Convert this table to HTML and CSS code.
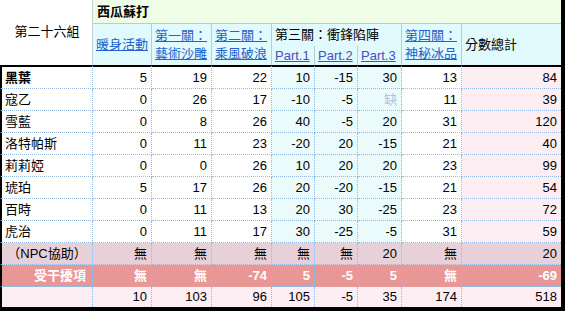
FILE: index.html
```html
<!DOCTYPE html>
<html lang="zh-Hant">
<head>
<meta charset="utf-8">
<title>第二十六組 西瓜蘇打</title>
<link rel="stylesheet" href="styles.css">
</head>
<body>
<table class="score">
  <colgroup>
    <col class="c-name"><col class="c-60"><col class="c-61"><col class="c-61">
    <col class="c-43"><col class="c-43"><col class="c-44"><col class="c-61"><col class="c-sum">
  </colgroup>
  <thead>
    <tr class="h1">
      <th class="grp" rowspan="3">第二十六組</th>
      <th class="title" colspan="8">西瓜蘇打</th>
    </tr>
    <tr class="h2">
      <th class="hd" rowspan="2"><a href="#" class="lnk">暖身活動</a></th>
      <th class="hd two" rowspan="2"><a href="#" class="lnk">第一關：</a><br><a href="#" class="lnk">藝術沙雕</a></th>
      <th class="hd two" rowspan="2"><a href="#" class="lnk">第二關：</a><br><a href="#" class="lnk">乘風破浪</a></th>
      <th class="hd" colspan="3">第三關：衝鋒陷陣</th>
      <th class="hd two" rowspan="2"><a href="#" class="lnk">第四關：</a><br><a href="#" class="lnk">神秘冰品</a></th>
      <th class="hd last" rowspan="2">分數總計</th>
    </tr>
    <tr class="h3">
      <th class="hd part"><a href="#" class="vis">Part.1</a></th>
      <th class="hd part"><a href="#" class="vis">Part.2</a></th>
      <th class="hd part"><a href="#" class="vis">Part.3</a></th>
    </tr>
  </thead>
  <tbody>
    <tr class="first">
      <td class="nm b">黑葉</td><td>5</td><td>19</td><td>22</td><td class="p">10</td><td class="p">-15</td><td class="p">30</td><td>13</td><td class="t">84</td>
    </tr>
    <tr>
      <td class="nm">寇乙</td><td>0</td><td>26</td><td>17</td><td class="p">-10</td><td class="p">-5</td><td class="p miss">缺</td><td>11</td><td class="t">39</td>
    </tr>
    <tr>
      <td class="nm">雪藍</td><td>0</td><td>8</td><td>26</td><td class="p">40</td><td class="p">-5</td><td class="p">20</td><td>31</td><td class="t">120</td>
    </tr>
    <tr>
      <td class="nm">洛特帕斯</td><td>0</td><td>11</td><td>23</td><td class="p">-20</td><td class="p">20</td><td class="p">-15</td><td>21</td><td class="t">40</td>
    </tr>
    <tr>
      <td class="nm">莉莉婭</td><td>0</td><td>0</td><td>26</td><td class="p">10</td><td class="p">20</td><td class="p">20</td><td>23</td><td class="t">99</td>
    </tr>
    <tr>
      <td class="nm">琥珀</td><td>5</td><td>17</td><td>26</td><td class="p">20</td><td class="p">-20</td><td class="p">-15</td><td>21</td><td class="t">54</td>
    </tr>
    <tr>
      <td class="nm">百時</td><td>0</td><td>11</td><td>13</td><td class="p">20</td><td class="p">30</td><td class="p">-25</td><td>23</td><td class="t">72</td>
    </tr>
    <tr>
      <td class="nm">虎治</td><td>0</td><td>11</td><td>17</td><td class="p">30</td><td class="p">-25</td><td class="p">-5</td><td>31</td><td class="t">59</td>
    </tr>
    <tr class="npc">
      <td class="nm ctr">（NPC協助）</td><td>無</td><td>無</td><td>無</td><td>無</td><td>無</td><td>20</td><td>無</td><td>20</td>
    </tr>
    <tr class="hit">
      <td class="nm rt">受干擾項</td><td>無</td><td>無</td><td>-74</td><td>5</td><td>-5</td><td>5</td><td>無</td><td>-69</td>
    </tr>
    <tr class="sum">
      <td class="nm"></td><td>10</td><td>103</td><td>96</td><td>105</td><td>-5</td><td>35</td><td>174</td><td>518</td>
    </tr>
  </tbody>
</table>
</body>
</html>
```
FILE: styles.css
```css
html, body {
  margin: 0;
  padding: 0;
  background: #000;
}
body {
  width: 565px;
  height: 311px;
  overflow: hidden;
}
.score {
  border-collapse: separate;
  border-spacing: 0;
  table-layout: fixed;
  width: 561px;
  font-family: "Liberation Sans", "Noto Sans CJK TC", sans-serif;
  font-size: 13px;
  color: #000;
  background: #fff;
}
.c-name { width: 93px; }
.c-60 { width: 59px; }
.c-61 { width: 60px; }
.c-43 { width: 43px; }
.c-44 { width: 44px; }
.c-sum { width: 99px; }

th, td {
  box-sizing: border-box;
  padding: 0 4px 0 3px;
  line-height: 16px;
  font-weight: normal;
  white-space: nowrap;
  overflow: hidden;
  vertical-align: middle;
}

/* header */
.h1 { height: 24px; }
.h2 { height: 22px; }
.h3 { height: 19px; }
.grp {
  background: #fff;
  border-left: 2px solid #fff;
  border-right: 1px solid #c6d0d6;
  text-align: center;
  padding: 0 0 2px 0;
}
.title {
  background: #effde6;
  border-bottom: 1px solid #c2cac2;
  text-align: left;
  font-weight: bold;
  padding-left: 4px;
}
.hd {
  background: #e0fafe;
  border-right: 1px solid #b9ccd6;
  text-align: left;
}
.hd.two { line-height: 18px; }
.hd.last { border-right: 0; }
.lnk { color: #2560cc; text-decoration: underline; }
.vis { color: #4a4cc2; text-decoration: underline; }

/* body */
td {
  text-align: right;
  padding: 0 4px 0 3px;
  border-right: 1px dotted #93bbe2;
  border-bottom: 1px dotted #93bbe2;
  background: #fff;
}
td:last-child { border-right: 0; }
tbody tr { height: 22px; }
tbody tr.first { height: 24px; }
tbody tr.first td { border-top: 2px solid #000; }
td.nm {
  text-align: left;
  border-left: 2px solid #000;
  padding-left: 3px;
}
td.b { font-weight: bold; }
td.p { background: #ebfbfb; }
td.t { background: #fdeef3; }
td.miss { color: #a9c3de; }

tr.npc td { background: #e8d0d9; }
td.ctr { text-align: center; padding: 0; }

tr.hit td {
  background: #e89696;
  color: #fff;
  font-weight: bold;
}
td.rt { text-align: right; padding-right: 6px; }

tbody tr.sum { height: 20px; }
tr.sum td {
  background: #fdeef4;
  border-bottom: 0;
}
```
